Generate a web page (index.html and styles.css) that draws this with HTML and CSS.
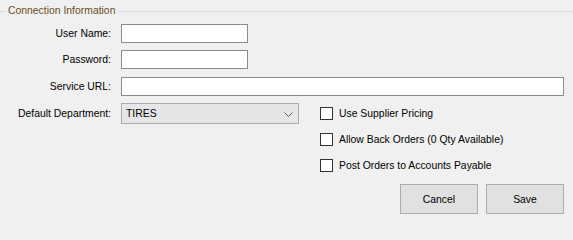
FILE: index.html
```html
<!DOCTYPE html>
<html>
<head>
<meta charset="utf-8">
<link rel="stylesheet" href="styles.css">
</head>
<body>
<div class="group">
  <div class="group-head">
    <span class="line line-short"></span>
    <span class="group-title">Connection Information</span>
    <span class="line line-long"></span>
  </div>
  <div class="fields">
    <div class="row r1">
      <label class="lbl">User Name:</label>
      <div class="input short"></div>
    </div>
    <div class="row r2">
      <label class="lbl">Password:</label>
      <div class="input short"></div>
    </div>
    <div class="row r3">
      <label class="lbl">Service URL:</label>
      <div class="input long"></div>
    </div>
    <div class="bottom">
      <div class="row r4">
        <label class="lbl">Default Department:</label>
        <div class="select">
          <span class="select-text">TIRES</span>
          <svg class="chev" width="9" height="5" viewBox="0 0 9 5"><polyline points="0.5,0.5 4.5,4.5 8.5,0.5" fill="none" stroke="#606060" stroke-width="1"/></svg>
        </div>
      </div>
      <div class="right">
        <div class="checks">
          <div class="check"><span class="box"></span><span>Use Supplier Pricing</span></div>
          <div class="check"><span class="box"></span><span>Allow Back Orders (0 Qty Available)</span></div>
          <div class="check"><span class="box"></span><span>Post Orders to Accounts Payable</span></div>
        </div>
      </div>
    </div>
    <div class="buttons">
      <button class="btn">Cancel</button>
      <button class="btn">Save</button>
    </div>
  </div>
</div>
</body>
</html>
```
FILE: styles.css
```css
html, body {
  margin: 0;
  padding: 0;
  background: #f0f0f0;
  width: 573px;
  height: 222px;
  overflow: hidden;
  font-family: "Liberation Sans", Arial, sans-serif;
  font-size: 10.4px;
  color: #000;
}
.group-head {
  display: flex;
  align-items: center;
  height: 22px;
}
.line {
  height: 1px;
  background: #dcdcdc;
}
.line-short {
  width: 6px;
}
.line-long {
  flex: 1;
}
.group-title {
  color: #6b4d1f;
  padding: 0 3px 0 2px;
  line-height: 12px;
}
.fields {
  padding-top: 2px;
}
.row {
  display: flex;
  align-items: center;
}
.r2 { margin-top: 7px; }
.r3 { margin-top: 8px; }
.lbl {
  width: 111px;
  text-align: right;
  margin-right: 10px;
  flex-shrink: 0;
}
.input {
  box-sizing: border-box;
  height: 19px;
  background: #fff;
  border: 1px solid #8a8a8a;
}
.input.short { width: 127px; }
.input.long { width: 443px; }
.bottom {
  display: flex;
  margin-top: 7px;
}
.r4 {
  align-self: flex-start;
  height: 21px;
}
.select {
  box-sizing: border-box;
  width: 178px;
  height: 21px;
  background: #e6e6e6;
  border: 1px solid #ababab;
  display: flex;
  align-items: center;
  justify-content: space-between;
  padding: 0 5px 0 4px;
}
.chev {
  margin-top: 1px;
}
.right {
  margin-left: 21px;
  padding-top: 4px;
}
.checks {
  display: flex;
  flex-direction: column;
  gap: 13px;
}
.check {
  display: flex;
  align-items: center;
  height: 13px;
}
.box {
  box-sizing: border-box;
  width: 13px;
  height: 13px;
  background: #fff;
  border: 1px solid #333;
  margin-right: 6px;
  flex-shrink: 0;
}
.buttons {
  display: flex;
  justify-content: flex-end;
  gap: 8px;
  padding-right: 9px;
  margin-top: 12px;
}
.btn {
  box-sizing: border-box;
  width: 78px;
  height: 30px;
  background: #e1e1e1;
  border: 1px solid #adadad;
  font-family: "Liberation Sans", Arial, sans-serif;
  font-size: 10.4px;
  color: #000;
  padding: 0;
}
```
